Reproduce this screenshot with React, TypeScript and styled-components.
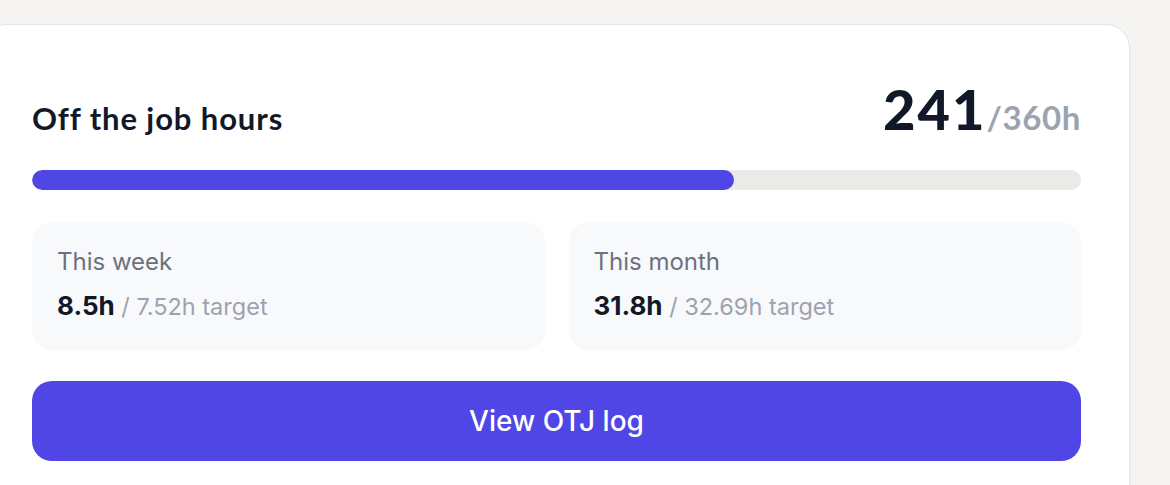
import React from 'react';
import styled, { createGlobalStyle } from 'styled-components';

const GlobalStyle = createGlobalStyle`
  html, body {
    margin: 0;
    padding: 0;
    background: #f5f4f2;
    overflow: hidden;
  }
  * {
    box-sizing: border-box;
  }
`;

const Page = styled.div`
  padding-top: 24px;
  min-height: 485px;
`;

const Card = styled.section`
  width: 1147px;
  margin-left: -17px;
  padding: 56px 48px 48px;
  background: #fff;
  border: 1px solid #e8e6e3;
  border-radius: 24px;
  box-shadow: 0 1px 3px rgba(0, 0, 0, 0.05);
  display: flex;
  flex-direction: column;
`;

const Header = styled.div`
  display: flex;
  justify-content: space-between;
  align-items: baseline;
`;

const Title = styled.h2`
  margin: 0;
  font-family: Lato, 'Noto Sans', sans-serif;
  font-size: 31px;
  font-weight: 700;
  color: #111827;
  letter-spacing: 0.9px;
`;

const Total = styled.div`
  font-family: Lato, 'Noto Sans', sans-serif;
  line-height: 1;
`;

const TotalValue = styled.span`
  font-size: 56px;
  font-weight: 900;
  color: #111827;
  letter-spacing: 2px;
`;

const TotalTarget = styled.span`
  font-size: 33px;
  font-weight: 700;
  color: #9ca3af;
  letter-spacing: 0.6px;
`;

const Track = styled.div`
  margin-top: 33px;
  height: 20px;
  border-radius: 10px;
  background: #eceae7;
  overflow: hidden;
`;

const Fill = styled.div`
  height: 100%;
  border-radius: 10px;
  background: #4f46e5;
`;

const Stats = styled.div`
  margin-top: 32px;
  display: grid;
  grid-template-columns: 1fr 1fr;
  gap: 24px;
`;

const StatBox = styled.div`
  background: #f8f9fb;
  border-radius: 20px;
  padding: 25px 25px 28px;
  font-family: Inter, 'Noto Sans', sans-serif;
  display: flex;
  flex-direction: column;
  gap: 14px;
`;

const StatLabel = styled.div`
  font-size: 24px;
  color: #6b7280;
  line-height: 30px;
`;

const StatLine = styled.div`
  font-size: 23.5px;
  line-height: 30px;
  color: #9ca3af;
`;

const StatValue = styled.span`
  font-size: 26px;
  font-weight: 700;
  color: #111827;
`;

const Button = styled.button`
  margin-top: 31px;
  height: 80px;
  border: none;
  border-radius: 20px;
  background: #4f46e5;
  color: #fff;
  font-family: Inter, 'Noto Sans', sans-serif;
  font-size: 28px;
  font-weight: 500;
  cursor: pointer;
`;

const stats = [
  { label: 'This week', value: '8.5h', target: '7.52h' },
  { label: 'This month', value: '31.8h', target: '32.69h' },
];

const done = 241;
const goal = 360;

export default function App() {
  return (
    <>
      <GlobalStyle />
      <Page>
        <Card>
          <Header>
            <Title>Off the job hours</Title>
            <Total>
              <TotalValue>{done}</TotalValue>
              <TotalTarget>/{goal}h</TotalTarget>
            </Total>
          </Header>
          <Track>
            <Fill style={{ width: `${(done / goal) * 100}%` }} />
          </Track>
          <Stats>
            {stats.map((s) => (
              <StatBox key={s.label}>
                <StatLabel>{s.label}</StatLabel>
                <StatLine>
                  <StatValue>{s.value}</StatValue> / {s.target} target
                </StatLine>
              </StatBox>
            ))}
          </Stats>
          <Button>View OTJ log</Button>
        </Card>
      </Page>
    </>
  );
}
